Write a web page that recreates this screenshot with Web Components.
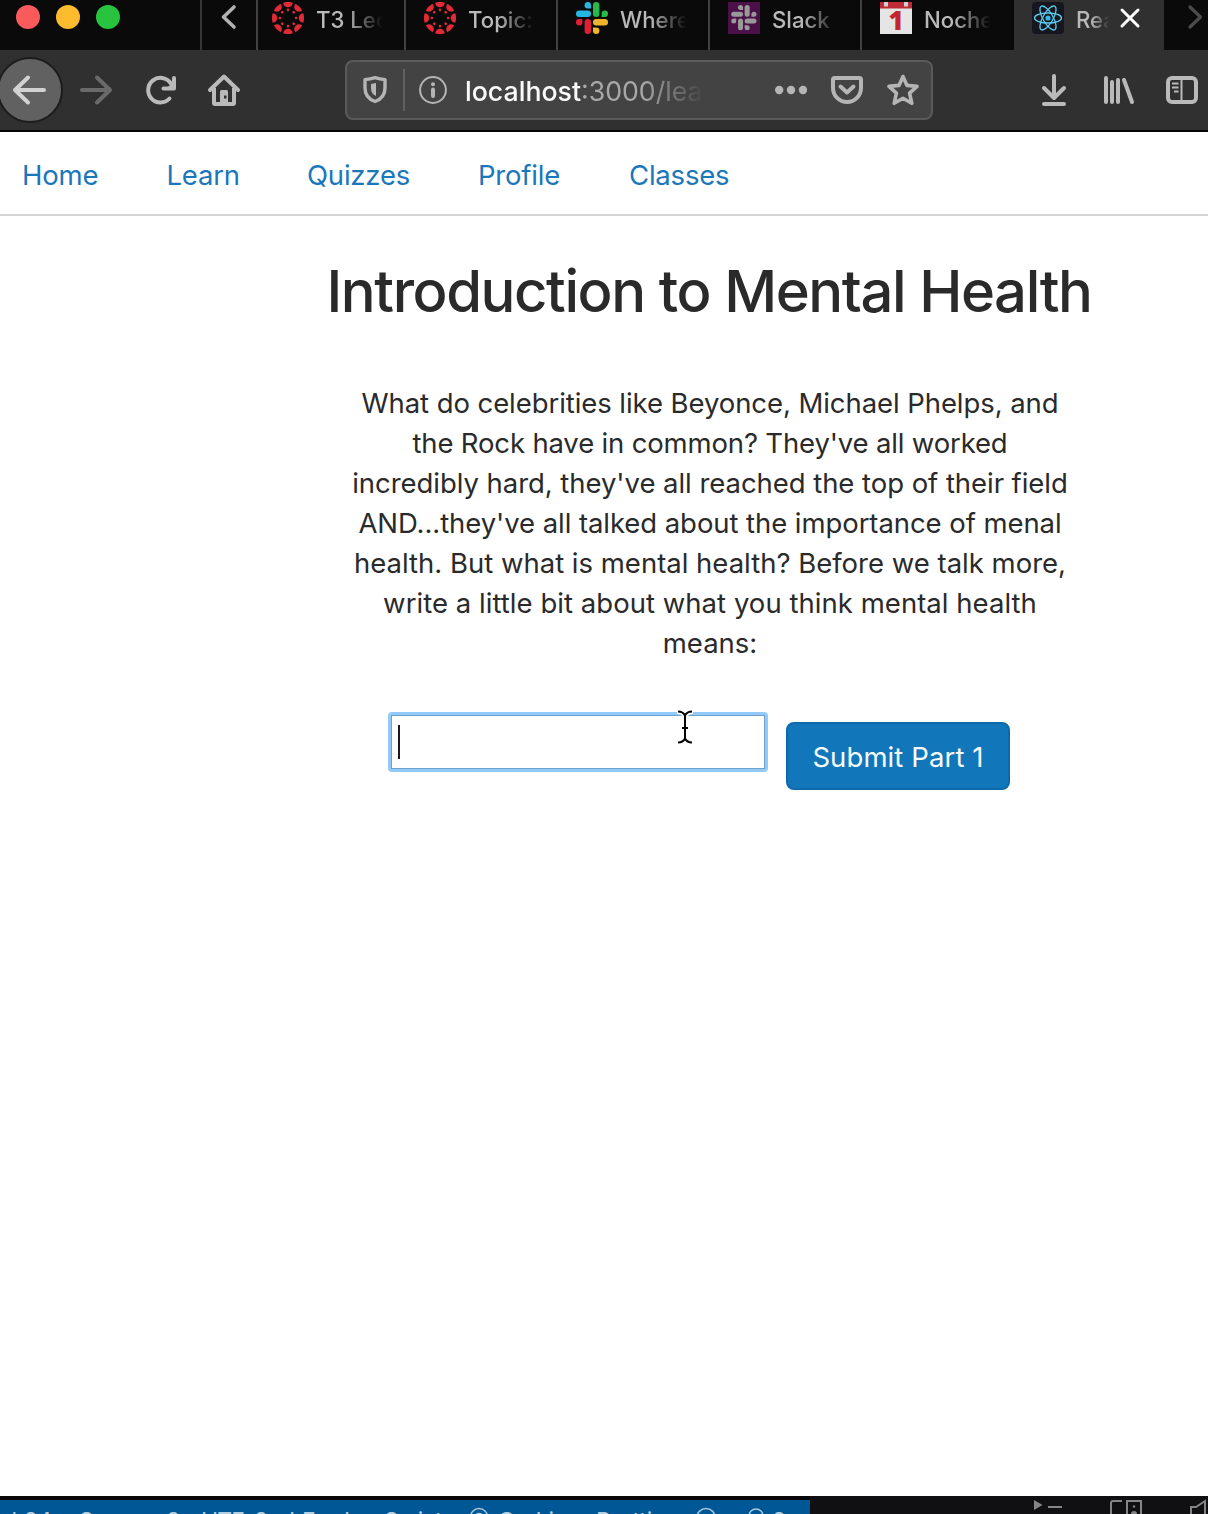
<!DOCTYPE html>
<html lang="en"><head><meta charset="utf-8"><title>React App</title>
<style>
html,body{margin:0;height:100%}
body{font-family:Inter,"Liberation Sans",sans-serif;background:#fff;overflow:hidden}
</style></head><body>
<app-window></app-window>
<script>
function define(name, css, html){
  customElements.define(name, class extends HTMLElement{
    constructor(){
      super();
      const t=document.createElement('template');
      t.innerHTML='<style>*{box-sizing:border-box}svg{display:block;flex:none}'+css+'</style>'+html;
      this.attachShadow({mode:'open'}).append(t.content.cloneNode(true));
    }
  });
}
const petals=[0,45,90,135,180,225,270,315].map(a=>`<g transform="rotate(${a} 16 16)"><path d="M11.2 .7A16 16 0 0 1 20.8 .7Q20 5.2 16 5.2Q12 5.2 11.2 .7Z"/><circle cx="16" cy="7.9" r="1.35"/></g>`).join('');
const slack=(a,b,c,d)=>`<g fill="${a}"><rect x="0" y="8.6" width="15" height="6.4" rx="3.2"/><path d="M15 6.4H11.8A3.2 3.2 0 1 1 15 3.2Z"/></g><g fill="${b}"><rect x="17" y="0" width="6.4" height="15" rx="3.2"/><path d="M25.6 15V11.8A3.2 3.2 0 1 1 28.8 15Z"/></g><g fill="${c}"><rect x="17" y="17" width="15" height="6.4" rx="3.2"/><path d="M17 25.6H20.2A3.2 3.2 0 1 1 17 28.8Z"/></g><g fill="${d}"><rect x="8.6" y="17" width="6.4" height="15" rx="3.2"/><path d="M6.4 17V20.2A3.2 3.2 0 1 1 3.2 17Z"/></g>`;
const fav={
 canvas:`<svg width="32" height="32" viewBox="0 0 32 32" fill="#e22a36">${petals}</svg>`,
 slack:`<svg width="32" height="32" viewBox="0 0 32 32">${slack('#25b7de','#29b94b','#efb32d','#df1f36')}</svg>`,
 slackbox:`<svg width="32" height="32" viewBox="0 0 32 32"><path fill="#4a1047" d="M0 0h32v32H0z"/><g transform="translate(3.2 3) scale(.79)">${slack('#999','#999','#999','#999')}</g></svg>`,
 cal:`<svg width="32" height="32" viewBox="0 0 32 32"><path fill="#e5e5e5" d="M0 0h32v32H0z"/><path fill="#bd2b34" d="M0 0h32v6.5H0z"/><path fill="#cfcfcf" d="M4 0h4v4.5H4zM24 0h4v4.500h-4z"/><text x="16" y="28.3" text-anchor="middle" font-family="Open Sans, sans-serif" font-weight="800" font-size="26" fill="#c1272d">1</text></svg>`,
 react:`<svg width="32" height="32" viewBox="0 0 32 32"><rect width="32" height="32" rx="4" fill="#16161e"/><g fill="none" stroke="#5ccdf2" stroke-width="1.3"><ellipse cx="16" cy="16" rx="13.5" ry="5"/><ellipse cx="16" cy="16" rx="13.5" ry="5" transform="rotate(60 16 16)"/><ellipse cx="16" cy="16" rx="13.5" ry="5" transform="rotate(120 16 16)"/></g><circle cx="16" cy="16" r="2.6" fill="#2fb9ea"/></svg>`};
customElements.define('browser-tab', class extends HTMLElement{
  connectedCallback(){
    this.attachShadow({mode:'open'}).innerHTML=`<style>
    :host{display:flex;box-sizing:border-box;flex:none;width:152px;height:50px;padding:2px 0 0 18px;border-left:2px solid #424242;gap:12px;color:#b9b9b9;font-size:22.2px;font-weight:450}
    :host([first]){width:148px;padding-left:14px}
    :host([wide]){width:154px}
    :host([active]){width:150px;background:#303031;border-left:0}
    :host([active]) .t{width:34px}
    :host([active]) .x{display:block}
    svg{display:block;flex:none}
    .t{width:68px;height:34px;line-height:35px;overflow:hidden;white-space:nowrap;-webkit-mask-image:linear-gradient(90deg,#000 45%,transparent 98%);mask-image:linear-gradient(90deg,#000 45%,transparent 98%)}
    .x{display:none;margin:4px 0 0 -4px}
    </style>${fav[this.getAttribute('icon')]}<div class="t"><slot></slot></div><svg class="x" width="24" height="24" viewBox="0 0 24 24"><path d="M4 4l16 16M20 4L4 20" fill="none" stroke="#fff" stroke-width="3" stroke-linecap="round"/></svg>`;
  }
});
define('tab-strip',`:host{display:flex;height:50px;background:#0a0a0b;overflow:hidden}
.lights{display:flex;width:200px;gap:16px;padding:5px 0 0 16px;flex:none}.lights i{width:24px;height:24px;border-radius:50%}
.prev{width:56px;border-left:2px solid #363636;flex:none}`,
`<div class="lights"><i style="background:#f95a5c"></i><i style="background:#fdbc2e"></i><i style="background:#28c440"></i></div>
<div class="prev"><svg width="54" height="50"><path d="M32 7L21.5 17L32 27" fill="none" stroke="#b2b2b2" stroke-width="3.600" stroke-linecap="round" stroke-linejoin="round"/></svg></div>
<browser-tab first icon="canvas">T3 Lec</browser-tab><browser-tab icon="canvas">Topic:</browser-tab><browser-tab icon="slack">Where</browser-tab><browser-tab icon="slackbox">Slack</browser-tab><browser-tab wide icon="cal">Noche</browser-tab><browser-tab active icon="react">Rea</browser-tab>
<div class="next"><svg width="44" height="50"><path d="M26 7L36.5 17L26 27" fill="none" stroke="#4c4c4c" stroke-width="3.2" stroke-linecap="round" stroke-linejoin="round"/></svg></div>`);
define('url-field',`:host{display:flex;align-items:center;box-sizing:border-box;width:588px;height:60px;flex:none;border:2px solid #5a5a5a;border-radius:8px;background:#434344;font-size:26.7px;color:#a8a8a8}
.u{width:240px;height:40px;line-height:42px;margin:0 -4px 0 18px;overflow:hidden;white-space:nowrap;-webkit-mask-image:linear-gradient(90deg,#000 74%,transparent 100%);mask-image:linear-gradient(90deg,#000 74%,transparent 100%)}b{font-weight:450;color:#fafafa}.sep{width:2px;height:42px;background:#616161;margin:0 14px 0 15px}`,
`<svg width="26" height="32" viewBox="0 0 26 32" style="margin-left:15px"><path d="M3 5.6Q8 5 13 3.6Q18 5 23 5.6V14Q23 24 13 27.5Q3 24 3 14Z" fill="none" stroke="#b5b5b5" stroke-width="3.4" stroke-linejoin="round"/><path d="M9 10q2.5-.3 5-1v13Q9 20 9 14Z" fill="#b5b5b5"/></svg><i class="sep"></i>
<svg width="28" height="28" viewBox="0 0 28 28"><circle cx="14" cy="14" r="12.9" fill="none" stroke="#b5b5b5" stroke-width="2"/><circle cx="14" cy="8.2" r="2" fill="#b5b5b5"/><path d="M14 13.5v6.5" stroke="#b5b5b5" stroke-width="4" stroke-linecap="round"/></svg>
<div class="u"><b>localhost</b>:3000/lea</div>
<svg width="32" height="12" style="margin-left:74px" fill="#b5b5b5"><circle cx="4.2" cy="6" r="4.2"/><circle cx="16" cy="6" r="4.2"/><circle cx="28" cy="6" r="4.2"/></svg>
<svg width="32" height="32" viewBox="0 0 32 32" style="margin-left:24px" fill="none" stroke="#b5b5b5" stroke-width="4" stroke-linejoin="round" stroke-linecap="round"><path d="M3.5 4h25q1.5 0 1.5 1.5V14a14 14 0 0 1-28 0V5.5Q2 4 3.5 4ZM9.500 12.500L16 18.500L22.500 12.500"/></svg>
<svg width="32" height="34" viewBox="0 0 32 34" style="margin-left:24px" fill="none" stroke="#b5b5b5" stroke-width="3.6" stroke-linejoin="round"><path d="M16 3.500L20 12.400L30 13.400L22.600 20.200L24.800 30.300L16 25.200L7.200 30.300L9.400 20.200L2 13.400L12 12.400Z"/></svg>`);
define('tool-bar',`:host{display:flex;align-items:center;background:#303031;border-bottom:2px solid #050505;overflow:hidden}
.back{width:66px;height:66px;margin-left:-3px;border-radius:50%;background:#616162;border:2px solid #1c1c1e;flex:none}`,
`<div class="back"><svg width="62" height="62" viewBox="-1 -1 62 62"><path d="M44 30H15M28 17.500L15 30L28 42.500" fill="none" stroke="#d2d2d2" stroke-width="4" stroke-linecap="round" stroke-linejoin="round"/></svg></div>
<svg width="36" height="36" viewBox="0 0 36 36" style="margin-left:14px"><path d="M5 18H33M20 5.500L33 18L20 30.500" fill="none" stroke="#6a6a6a" stroke-width="4" stroke-linecap="round" stroke-linejoin="round"/></svg>
<svg width="34" height="36" viewBox="0 0 34 36" style="margin-left:31px"><path d="M26.500 11A12.300 12.300 0 1 0 25.500 26.500" fill="none" stroke="#bababa" stroke-width="4" stroke-linecap="round"/><path d="M30 6V16.500H19.500" fill="none" stroke="#bababa" stroke-width="4" stroke-linecap="round" stroke-linejoin="round"/><path d="M24 15L29 10V16Z" fill="#bababa"/></svg>
<svg width="34" height="34" viewBox="0 0 34 34" style="margin-left:29px"><path d="M3 17L17 3.500L31 17" fill="none" stroke="#bababa" stroke-width="4" stroke-linecap="round" stroke-linejoin="round"/><path d="M7 15V30q0 1 1 1H26q1 0 1-1V15" fill="none" stroke="#bababa" stroke-width="4"/><path d="M13 32V18.500q0-1.500 1.500-1.500h5q1.500 0 1.500 1.500V32Z" fill="#bababa"/><rect x="17" y="22.500" width="2.500" height="3" fill="#303031"/></svg>
<url-field style="margin-left:104px"></url-field>
<svg width="28" height="34" viewBox="0 0 28 34" style="margin-left:107px" fill="none" stroke="#bababa" stroke-width="4" stroke-linecap="round" stroke-linejoin="round"><path d="M14 3V24M4 15L14 25L24 15M4 31H24"/></svg>
<svg width="34" height="34" viewBox="0 0 34 34" style="margin-left:34px" fill="none" stroke="#bababa" stroke-width="4" stroke-linecap="round"><path d="M4 5V29M10 9V29M16 7V29M22 7L30 29"/></svg>
<svg width="32" height="30" viewBox="0 0 32 30" style="margin-left:30px" fill="none" stroke="#bababa"><rect x="2" y="3" width="28" height="24" rx="4" stroke-width="4"/><path d="M15.500 3V27" stroke-width="2"/><path d="M6 8.500h6.500M6 12.500h6.500M8 16.500h4.500" stroke-width="2"/></svg>`);
define('site-nav',`:host{display:flex;height:84px;border-bottom:2px solid #d5d5d5;padding:1px 0 0 22px;font-size:27.5px;line-height:84px;letter-spacing:-.2px;color:#1b77ba}
span{white-space:nowrap;flex:none}`,
`<span style="width:144.5px">Home</span><span style="width:140.5px">Learn</span><span style="width:171px">Quizzes</span><span style="width:151px">Profile</span><span>Classes</span>`);
define('text-cursor',`:host{display:block;position:absolute;left:284px;top:-6px}`,`<svg width="20" height="36" viewBox="0 0 20 36" fill="none"><path stroke="#fff" stroke-width="5" d="M2 2.500Q8 2.500 10 7Q12 2.500 18 2.500M10 6V30M2 33.500Q8 33.500 10 29Q12 33.500 18 33.500"/><path d="M3 2.500Q8 2.500 10 6.500Q12 2.500 17 2.500M10 6V30M3 33.500Q8 33.500 10 29.500Q12 33.500 17 33.500M7 19H13" stroke="#000" stroke-width="2"/></svg>`);
define('answer-form',`:host{display:flex;align-items:flex-start;justify-content:center;gap:18px;margin-top:49px;padding-right:22px}
.in{position:relative;width:380px;height:60px;border-radius:4px;border:3px solid #94caf9;flex:none}
.in i{display:flex;height:54px;border:1px solid #6ba3cc;padding:9px 0 0 6px}.in b{width:2px;height:34px;background:#1a1a1a}
.btn{width:224px;height:68px;margin-top:10px;border-radius:8px;border:2px solid #0d69a9;background:#1276bb;color:#f6fbff;font-size:27.500px;letter-spacing:.1px;line-height:67px;text-align:center;white-space:nowrap;flex:none}`,
`<div class="in"><i><b></b></i><text-cursor></text-cursor></div><div class="btn"><span>Submit Part 1</span></div>`);
define('lesson-page',`:host{display:block;height:1280px;padding:38px 0 0 212px;background:#fff;color:#2a2a2b;text-align:center}
h1{margin:0 2px 0 0;font-size:58px;font-weight:500;line-height:74px;letter-spacing:-1.42px;white-space:nowrap}
p{margin:55px 0 0;font-size:27.500px;line-height:40px}p span{display:block;white-space:nowrap}`,
`<h1>Introduction to Mental Health</h1>
<p><span style="letter-spacing:-.07px">What do celebrities like Beyonce, Michael Phelps, and</span><span style="letter-spacing:-.16px">the Rock have in common? They've all worked</span><span style="letter-spacing:-.05px">incredibly hard, they've all reached the top of their field</span><span style="letter-spacing:-.07px">AND...they've all talked about the importance of menal</span><span>health. But what is mental health? Before we talk more,</span><span style="letter-spacing:.04px">write a little bit about what you think mental health</span><span>means:</span></p>
<answer-form></answer-form>`);
define('status-bar',`:host{display:flex;height:18px;background:#101013;overflow:hidden}
.blue{display:flex;width:810px;height:18px;border-top:4px solid #08080a;background:#005795;color:#b4cfe2;font-size:23px;line-height:28px;overflow:hidden;flex:none;padding-top:7px}
.blue span{flex:none;white-space:nowrap;height:28px}`,
`<div class="blue"><span style="width:79px;text-indent:-19px">Col 24</span><span style="width:122px;letter-spacing:-.8px">Spaces: 2</span><span style="width:88px;letter-spacing:-.8px">UTF-8</span><span style="width:48px">LF</span><span style="width:132px;letter-spacing:-1.1px">JavaScript</span>
<svg width="29" height="20" fill="none" stroke="#a8c9df" stroke-width="1.500"><circle cx="10" cy="10" r="8.500"/><circle cx="10" cy="11" r="4.500"/></svg><span style="width:98px">Go Live</span><span style="width:100px">Prettier</span>
<svg width="76" height="20" fill="none" stroke="#a8c9df" stroke-width="1.500"><circle cx="10" cy="10.500" r="9"/><circle cx="60" cy="9" r="7"/></svg><span>2</span></div>
<svg width="398" height="18" fill="none" stroke="#858585" stroke-width="2"><path d="M224 4l8.500 5l-8.500 5Z" fill="#858585" stroke="none"/><path d="M238 11H252M301 18V7q0-2 2-2H312M317 18V5H331V18"/><circle cx="324" cy="10.500" r="1.200" fill="#858585" stroke="none"/><circle cx="324" cy="18" r="3" fill="#858585" stroke="none"/><path d="M381 18V11H386L395 5V18"/></svg>`);
define('app-window',`:host{display:flex;flex-direction:column;width:1208px;height:1514px;overflow:hidden}
tool-bar{height:82px}`,
`<tab-strip></tab-strip><tool-bar></tool-bar><site-nav></site-nav><lesson-page></lesson-page><status-bar></status-bar>`);
</script></body></html>
